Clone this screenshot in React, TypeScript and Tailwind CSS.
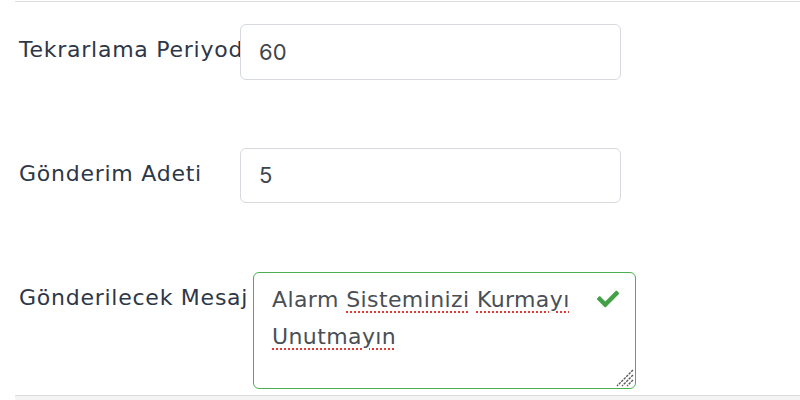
import React from "react";
import { FaCheck } from "react-icons/fa";

const dv = { fontFamily: "'DejaVu Sans', 'Noto Sans', sans-serif" };

export default function App() {
  const label =
    "text-[22px] leading-[24px] tracking-[0.75px] text-[#2d3748] whitespace-nowrap pt-[14px] pl-[4px] shrink-0";
  const spell =
    "underline decoration-dotted decoration-[#e53935] decoration-2 underline-offset-[4px]";
  return (
    <div className="w-[800px] h-[400px] bg-white overflow-hidden" style={{ fontFamily: "Inter, sans-serif" }}>
      <div className="pl-[15px] pt-px">
        <div className="border-t border-[#dedede] h-[23px]" />
      </div>
      <div className="pl-[15px]">
        <div className="flex items-start">
          <div className={`${label} w-[225px]`} style={dv}>Tekrarlama Periyodu</div>
          <div className="relative z-10 w-[381px] h-[56px] border border-[#d6dadf] rounded-[6px] bg-white flex items-center pl-[18px] text-[22px] text-[#3f454b]">
            60
          </div>
        </div>
        <div className="flex items-start mt-[68px]">
          <div className={`${label} w-[225px]`} style={dv}>Gönderim Adeti</div>
          <div className="relative z-10 w-[381px] h-[55px] border border-[#d6dadf] rounded-[6px] bg-white flex items-center pl-[18px] text-[22px] text-[#3f454b]">
            5
          </div>
        </div>
        <div className="flex items-start mt-[69px]">
          <div className={`${label} w-[238px]`} style={dv}>Gönderilecek Mesaj</div>
          <div className="relative z-10 w-[383px] h-[117px] border border-[#4caf50] rounded-[6px] bg-white overflow-hidden">
            <div
              className="pl-[18px] pr-[50px] pt-[8px] text-[22px] leading-[37px] tracking-[0.4px] text-[#4a4f55]"
              style={dv}
            >
              Alarm <span className={spell}>Sisteminizi</span>{" "}
              <span className={spell}>Kurmayı</span>{" "}
              <span className={spell}>Unutmayın</span>
            </div>
            <FaCheck className="absolute top-[15px] right-[16px] text-[#43a047]" size={22} />
            <svg className="absolute right-[1px] bottom-[1px]" width="20" height="20" viewBox="0 0 20 20">
              <g stroke="#5a5a5a" strokeWidth="1.4" strokeDasharray="2.5 1">
                <line x1="19" y1="3" x2="3" y2="19" />
                <line x1="19" y1="8" x2="8" y2="19" />
                <line x1="19" y1="13" x2="13" y2="19" />
              </g>
            </svg>
          </div>
        </div>
      </div>
      <div className="pl-[15px] mt-[6px]">
        <div className="border-t border-[#dcdcdc] h-[10px] bg-[#f4f4f4]" />
      </div>
    </div>
  );
}
